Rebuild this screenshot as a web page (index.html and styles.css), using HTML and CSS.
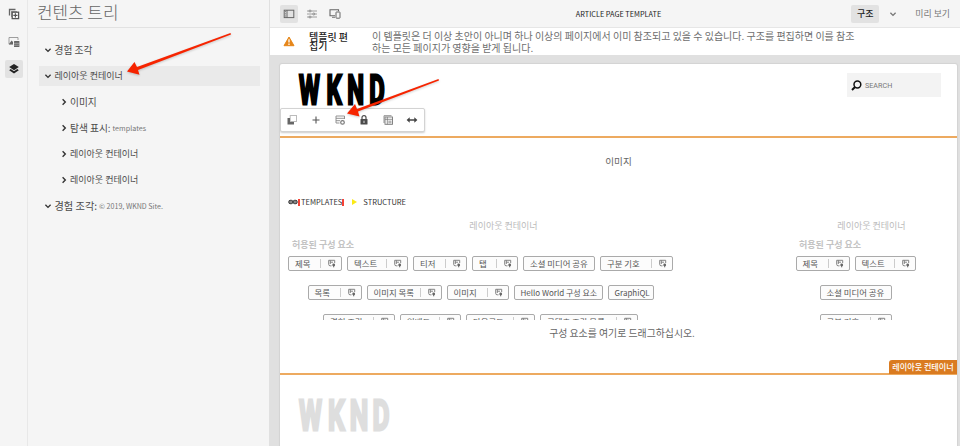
FILE: index.html
```html
<!DOCTYPE html>
<html>
<head>
<meta charset="utf-8">
<title>ARTICLE PAGE TEMPLATE</title>
<link rel="stylesheet" href="styles.css">
</head>
<body>
<svg class="defs" width="0" height="0">
  <defs>
    <symbol id="policy" viewBox="0 0 8 8"><path d="M3.5 6.3H2.2Q.7 6.3.7 4.8V.8H6.7V3.5M2.3.8V4.5M2.3 2.7H5" fill="none" stroke="#777" stroke-width=".9"/><circle cx="5.7" cy="5.4" r="1.4" fill="#666"/><path d="M5.7 5.2V7.8" stroke="#666"/></symbol>
    <symbol id="down" viewBox="0 0 8 8"><path d="M1.4 2.7 4 5.4 6.6 2.7" fill="none" stroke="currentColor" stroke-width="1.3"/></symbol>
    <symbol id="right" viewBox="0 0 8 8"><path d="M2.6 1.3 5.3 4 2.6 6.7" fill="none" stroke="currentColor" stroke-width="1.4"/></symbol>
  </defs>
</svg>
<div class="app">
  <nav class="rail">
    <span class="rail-item"><svg width="12" height="12" viewBox="0 0 12 12"><path d="M1.5 7.5V1.5H7.5" fill="none" stroke="#666" stroke-width="1.3"/><path d="M3 3H9V4H4V9H3Z" fill="#999"/><rect x="4.2" y="4.2" width="6.4" height="6.4" fill="#fff" stroke="#555" stroke-width="1.3"/><path d="M7.4 5.3V9.5M5.3 7.4H9.5" stroke="#555" stroke-width="1.2"/></svg></span>
    <span class="rail-item"><svg width="12" height="12" viewBox="0 0 12 12"><path d="M5 8.2H1V1.5H10V4" fill="none" stroke="#888" stroke-width=".8"/><path d="M1 8 3.6 4.6 5 6V8.3H1Z" fill="#666"/><rect x="6" y="5" width="5.4" height="6" rx=".5" fill="#666"/><path d="M6 7.3H11.4M6 9.2H11.4" stroke="#ddd" stroke-width=".5"/></svg></span>
    <span class="rail-item on"><svg width="12" height="12" viewBox="0 0 12 12"><path d="M6 1 10.8 4.1 6 7.2 1.2 4.1Z" fill="#222"/><path d="M2.7 6 1.2 7.2 6 10.6 10.8 7.2 9.3 6 6 8.3Z" fill="#222"/></svg></span>
  </nav>
  <aside class="panel">
    <h1>컨텐츠 트리</h1>
    <ul class="tree">
      <li class="big"><svg><use href="#down"/></svg>경험 조각</li>
      <li class="selected"><svg><use href="#down"/></svg>레이아웃 컨테이너</li>
      <li class="child big"><svg><use href="#right"/></svg>이미지</li>
      <li class="child big"><svg><use href="#right"/></svg>탐색 표시:<small>templates</small></li>
      <li class="child"><svg><use href="#right"/></svg>레이아웃 컨테이너</li>
      <li class="child"><svg><use href="#right"/></svg>레이아웃 컨테이너</li>
      <li class="big wide"><svg><use href="#down"/></svg>경험 조각:<small>© 2019, WKND Site.</small></li>
    </ul>
  </aside>
  <main class="main">
    <header class="topbar">
      <div class="tools">
        <span class="tool on"><svg width="12" height="10" viewBox="0 0 12 10"><rect x="1.2" y="1.2" width="9.6" height="7.4" fill="none" stroke="#666"/><path d="M4 1V9" stroke="#666"/><path d="M2.5 2V8" stroke="#888" stroke-dasharray="1 .8"/></svg></span>
        <span class="tool"><svg width="12" height="10" viewBox="0 0 12 10"><path d="M1 2H11M1 5H11M1 8H11" stroke="#888" stroke-width=".8"/><g fill="#f5f5f5" stroke="#777" stroke-width=".8"><circle cx="4" cy="2" r="1"/><circle cx="7.8" cy="5" r="1"/><circle cx="4" cy="8" r="1"/></g></svg></span>
        <span class="tool"><svg width="12" height="12" viewBox="0 0 12 12"><path d="M6 7.8H1V1.8H9.5V3.2" fill="none" stroke="#666" stroke-width="1.1"/><path d="M3 9.3H6" stroke="#777"/><rect x="7" y="4" width="4" height="6.2" rx=".5" fill="#f5f5f5" stroke="#666"/></svg></span>
      </div>
      <span class="doc-title">ARTICLE PAGE TEMPLATE</span>
      <div class="modes"><span class="mode">구조</span><svg class="mode-arrow"><use href="#down"/></svg><span class="preview">미리 보기</span></div>
    </header>
    <section class="notice">
      <svg class="warn" width="12" height="11" viewBox="0 0 12 11"><path d="M6 1 11 9.7H1Z" fill="#e68619" stroke="#e68619" stroke-linejoin="round"/><path d="M6 3.2V6.6M6 7.6V9" stroke="#fff" stroke-width="1.3"/></svg>
      <strong>템플릿 편<br>집기</strong>
      <p>이 템플릿은 더 이상 초안이 아니며 하나 이상의 페이지에서 이미 참조되고 있을 수 있습니다. 구조를 편집하면 이를 참조<br>하는 모든 페이지가 영향을 받게 됩니다.</p>
    </section>
    <section class="workspace">
      <article class="page">
        <div class="site-head">
          <svg class="logo" width="92" height="35"><text transform="scale(.58 1)" x="1.8 49 85 123" y="31">WKND</text></svg>
          <div class="search"><svg width="11" height="11" viewBox="0 0 11 11"><circle cx="6.4" cy="4.5" r="3.4" fill="none" stroke="#111" stroke-width="1.5"/><path d="M4 7 1 10" stroke="#111" stroke-width="2"/></svg>SEARCH</div>
          <div class="actions">
            <svg viewBox="0 0 12 12"><rect x="4.2" y="1.5" width="6.3" height="6" fill="#fff" stroke="#bbb"/><path d="M1.5 4H4V8H8V10.5H1.5Z" fill="#666"/></svg>
            <svg viewBox="0 0 12 12"><path d="M6 2.5V9.5M2.5 6H9.5" stroke="#555" stroke-width="1.1"/></svg>
            <svg viewBox="0 0 12 12"><path d="M5.5 9H2V2H10.5V5M2 4.3H10.5M2 6.7H6" fill="none" stroke="#888" stroke-width=".9"/><circle cx="8.5" cy="8.4" r="1.8" fill="#fff" stroke="#777" stroke-width="1.2"/></svg>
            <svg viewBox="0 0 12 12"><rect x="2.5" y="5" width="7" height="5.5" rx=".5" fill="#4b4b4b"/><path d="M4 5V3.6A2 2 0 0 1 8 3.6V5" fill="none" stroke="#4b4b4b" stroke-width="1.2"/><path d="M6 6.7V9" stroke="#ddd"/></svg>
            <svg viewBox="0 0 12 12"><path d="M2 9V1.7H9.5" fill="none" stroke="#888" stroke-width=".9"/><rect x="3" y="3" width="7.5" height="7.3" fill="#fff" stroke="#777" stroke-width=".9"/><path d="M3 5.3H10.5M5.3 3V10.3M6.3 7.2H9.5M6.3 8.8H9.5" stroke="#777" stroke-width=".8"/></svg>
            <svg viewBox="0 0 12 12"><path d="M2 6H10" stroke="#444" stroke-width="1.5"/><path d="M.6 6 3.7 3.3V8.7ZM11.4 6 8.3 3.3V8.7Z" fill="#444"/></svg>
          </div>
        </div>
        <div class="container">
          <div class="image-slot">이미지</div>
          <div class="crumbs"><svg width="10" height="6" viewBox="0 0 10 6"><path d="M1 3H9" stroke="#333"/><rect x=".8" y="1.3" width="4" height="3.4" rx="1.4" fill="#888" stroke="#333"/><rect x="5.2" y="1.3" width="4" height="3.4" rx="1.4" fill="#888" stroke="#333"/></svg><b></b><span>TEMPLATES</span><b></b><i></i><span>STRUCTURE</span></div>
          <div class="columns">
            <div class="column left">
              <div class="layout-name">레이아웃 컨테이너</div>
              <div class="allowed">허용된 구성 요소</div>
              <div class="chips">
                <div class="row">
                  <span class="chip w54">제목<svg><use href="#policy"/></svg></span><span class="chip w61">텍스트<svg><use href="#policy"/></svg></span><span class="chip w54">티저<svg><use href="#policy"/></svg></span><span class="chip w46">탭<svg><use href="#policy"/></svg></span><span class="chip w72">소셜 미디어 공유</span><span class="chip w73">구분 기호<svg><use href="#policy"/></svg></span>
                </div>
                <div class="row">
                  <span class="chip w54">목록<svg><use href="#policy"/></svg></span><span class="chip w75">이미지 목록<svg><use href="#policy"/></svg></span><span class="chip w62">이미지<svg><use href="#policy"/></svg></span><span class="chip w89 latin">Hello World 구성 요소</span><span class="chip w46 latin">GraphiQL</span>
                </div>
                <div class="row">
                  <span class="chip w72">경험 조각<svg><use href="#policy"/></svg></span><span class="chip w61">임베드<svg><use href="#policy"/></svg></span><span class="chip w69">다운로드<svg><use href="#policy"/></svg></span><span class="chip w98">콘텐츠 조각 목록<svg><use href="#policy"/></svg></span>
                </div>
              </div>
            </div>
            <div class="column right">
              <div class="layout-name">레이아웃 컨테이너</div>
              <div class="allowed">허용된 구성 요소</div>
              <div class="chips">
                <div class="row"><span class="chip w54">제목<svg><use href="#policy"/></svg></span><span class="chip w61">텍스트<svg><use href="#policy"/></svg></span></div>
                <div class="row"><span class="chip w72">소셜 미디어 공유</span></div>
                <div class="row"><span class="chip w72">구분 기호<svg><use href="#policy"/></svg></span></div>
              </div>
            </div>
          </div>
          <div class="drop">구성 요소를 여기로 드래그하십시오.</div>
          <span class="badge">레이아웃 컨테이너</span>
        </div>
        <div class="site-foot"><svg class="logo muted" width="92" height="36"><text transform="scale(.61 1)" x="1.8 49 85 122" y="33.2">WKND</text></svg></div>
      </article>
    </section>
  </main>
</div>
<svg class="arrows" width="960" height="446" viewBox="0 0 960 446">
  <g fill="#f62400"><path d="M230.5 33 231 34.6 138 70 139.5 74.8 127 71.5 134.5 62 137 67Z"/><path d="M438.5 79 439 80.6 358 111.5 359.5 116.5 347 113.5 355 104 357 109Z"/></g>
</svg>
</body>
</html>
```
FILE: styles.css
```css
* { box-sizing: border-box; }
body { margin: 0; overflow: hidden; background: #f5f5f5; color: #4b4b4b; font: 9px/12px "Noto Sans CJK KR", "Noto Sans", sans-serif; }
svg { display: block; flex: none; }
.defs { position: absolute; }
.app { display: flex; width: 960px; height: 446px; }
.rail { width: 28px; padding: 5px 4px 0 5px; border-right: 1px solid #e8e8e8; }
.rail-item { display: flex; align-items: center; justify-content: center; width: 18px; height: 18px; margin-bottom: 9.5px; border-radius: 2px; }
.rail-item.on, .tool.on { background: #e2e2e2; }
.panel { width: 242px; padding: 0 9px 0 9px; border-right: 1px solid #e0e0e0; }
.panel h1 { height: 28px; margin: 0; border-bottom: 1px solid #e2e2e2; font-size: 16.9px; line-height: 24px; font-weight: 300; color: #666; }
.tree { margin: 11.5px 0 0; padding: 0 0 0 2px; list-style: none; }
.tree li { display: flex; align-items: center; height: 20px; margin-bottom: 6px; padding-left: 5px; white-space: nowrap; }
.tree li svg { width: 8px; height: 8px; margin-right: 2.5px; color: #333; }
.tree li.big { font-size: 9.7px; }
.tree li.wide { font-size: 10.2px; }
.tree li.child { padding-left: 20.5px; }
.tree .selected { background: #eaeaea; }
.tree small { margin: 1px 0 0 2px; font-size: 7.1px; color: #777; }
.tree .child small { font-size: 7.2px; }
.main { display: flex; flex-direction: column; width: 690px; }
.topbar { display: grid; grid-template-columns: 1fr auto 1fr; align-items: center; height: 28px; padding: 0 10px; border-bottom: 1px solid #e6e6e6; }
.tools, .modes { display: flex; align-items: center; }
.tools { gap: 5px; }
.tool { display: flex; align-items: center; justify-content: center; width: 18px; height: 18px; border-radius: 2px; }
.doc-title { margin-left: 7px; font-size: 7.3px; color: #222; }
.modes { justify-content: flex-end; }
.mode { width: 28px; height: 18px; border-radius: 2px; background: #e2e2e2; color: #222; line-height: 17px; text-align: center; font-weight: 500; }
.mode-arrow { width: 8px; height: 8px; margin: 0 18px 0 10px; color: #777; }
.preview { color: #777; font-size: 8.9px; }
.notice { display: flex; height: 27px; padding: 2px 0 0 13px; background: #fff; font-size: 10px; line-height: 11.5px; }
.warn { margin-top: 6px; }
.notice strong { width: 63px; padding: 2px 0 0 14px; color: #222; font-weight: 500; line-height: 9px; white-space: nowrap; }
.notice p { margin: 0 0 0 14px; color: #6e6e6e; white-space: nowrap; }
.workspace { flex: 1; padding: 9px 3px 0 10px; background: #e0e0e0; }
.page { height: 382px; background: #fff; border-radius: 2px 2px 0 0; box-shadow: 0 0 1px 1px #d3d3d3; }
.site-head { position: relative; display: flex; justify-content: space-between; height: 72px; padding: 9px 16px 0 18px; }
.logo { fill: #000; stroke: #000; stroke-width: 2.8; font: 700 41px Roboto, sans-serif; }
.logo.muted { fill: #dedede; stroke: #dedede; font-size: 43px; }
.search { display: flex; align-items: center; gap: 3px; width: 94px; height: 24px; padding-left: 4px; background: #f3f3f3; color: #777; font: 7.2px Roboto, sans-serif; }
.actions { position: absolute; left: 0; top: 44px; display: flex; align-items: center; gap: 12px; width: 145px; height: 24px; padding-left: 5px; background: #fff; border: 1px solid #d3d3d3; border-radius: 2px; box-shadow: 0 1px 2px #ccc; }
.actions svg { width: 12px; height: 12px; }
.container { position: relative; height: 239px; border: solid #edaa60; border-width: 2px 0; }
.image-slot { height: 56px; padding-top: 17px; text-align: center; font-size: 9.6px; color: #666; }
.crumbs { display: flex; align-items: center; height: 16px; padding-left: 8px; font-size: 7.5px; color: #333; }
.crumbs b { flex: none; width: 2px; height: 7px; margin: 0 1px 0 0; background: #f54235; }
.crumbs span + b { margin: 0; }
.crumbs i { margin: 0 6px 0 8px; border: solid transparent; border-width: 3px 0 3px 5px; border-left-color: #fbea16; }
.columns { display: flex; height: 110px; padding: 8px 0 0 8px; }
.column.left { width: 385px; margin-right: 122px; }
.column.right { width: 121px; }
.layout-name { height: 17px; margin-left: 46px; text-align: center; color: #bbb; line-height: 16px; }
.right .layout-name { margin-left: 32px; line-height: 15px; }
.allowed { padding-left: 4px; height: 21px; line-height: 19px; color: #c3c3c3; font-size: 9px; font-weight: 700; }
.chips { height: 64px; overflow: hidden; }
.row { display: flex; justify-content: center; gap: 5px; height: 15px; margin-bottom: 14px; }
.chip { display: flex; align-items: center; justify-content: space-between; flex: none; height: 15px; padding: 0 6px; border: 1px solid #aaa; border-radius: 2px; background: #fcfcfc; color: #555; font-size: 8.4px; line-height: 11px; white-space: nowrap; }
.chip.latin { font-size: 8px; }
.chip svg { width: 16px; height: 9px; padding-left: 7px; margin-right: -1px; border-left: 1px solid #ccc; overflow: visible; }
.w46 { width: 46px; } .w54 { width: 54px; } .w61 { width: 61px; } .w62 { width: 62px; } .w69 { width: 69px; } .w72 { width: 72px; } .w73 { width: 73px; } .w75 { width: 75px; } .w89 { width: 89px; } .w98 { width: 98px; }
.drop { margin-top: 5.5px; padding-left: 7px; text-align: center; font-size: 9.9px; line-height: 15px; color: #666; }
.badge { position: absolute; right: 0; bottom: -1px; width: 68px; height: 14px; border-radius: 3px 0 0 0; background: #da7b20; color: #fff; font-size: 8.1px; line-height: 13px; font-weight: 500; text-align: center; }
.site-foot { padding: 22px 18px 0; }
.arrows { position: absolute; left: 0; top: 0; pointer-events: none; filter: drop-shadow(0 1px 1px #0003); }
```
